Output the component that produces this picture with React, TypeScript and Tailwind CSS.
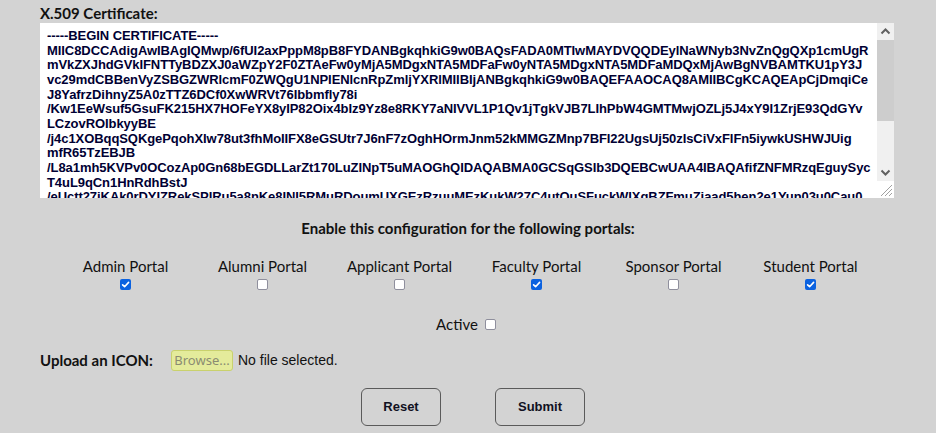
import React from "react";

const CERT = [
  "-----BEGIN CERTIFICATE-----",
  "MIIC8DCCAdigAwIBAgIQMwp/6fUI2axPppM8pB8FYDANBgkqhkiG9w0BAQsFADA0MTIwMAYDVQQDEylNaWNyb3NvZnQgQXp1cmUgR",
  "mVkZXJhdGVkIFNTTyBDZXJ0aWZpY2F0ZTAeFw0yMjA5MDgxNTA5MDFaFw0yNTA5MDgxNTA5MDFaMDQxMjAwBgNVBAMTKU1pY3J",
  "vc29mdCBBenVyZSBGZWRlcmF0ZWQgU1NPIENlcnRpZmljYXRlMIIBIjANBgkqhkiG9w0BAQEFAAOCAQ8AMIIBCgKCAQEApCjDmqiCe",
  "J8YafrzDihnyZ5A0zTTZ6DCf0XwWRVt76Ibbmfly78i",
  "/Kw1EeWsuf5GsuFK215HX7HOFeYX8yIP82Oix4bIz9Yz8e8RKY7aNIVVL1P1Qv1jTgkVJB7LIhPbW4GMTMwjOZLj5J4xY9I1ZrjE93QdGYv",
  "LCzovROIbkyyBE",
  "/j4c1XOBqqSQKgePqohXIw78ut3fhMoIIFX8eGSUtr7J6nF7zOghHOrmJnm52kMMGZMnp7BFI22UgsUj50zIsCiVxFIFn5iywkUSHWJUig",
  "mfR65TzEBJB",
  "/L8a1mh5KVPv0OCozAp0Gn68bEGDLLarZt170LuZINpT5uMAOGhQIDAQABMA0GCSqGSIb3DQEBCwUAA4IBAQAfifZNFMRzqEguySyc",
  "T4uL9qCn1HnRdhBstJ",
  "/eUctt27iKAk0rDYIZRekSPIRu5a8nKe8INI5RMuRDoumUXGEzRzuuMEzKukW27C4utQuSFuckWIXgBZFmuZiaad5hen2e1Yun03u0Cau0",
  "AbCdEf0123",
  "-----END CERTIFICATE-----",
].join("\n");

const portals: { name: string; checked: boolean }[] = [
  { name: "Admin Portal", checked: true },
  { name: "Alumni Portal", checked: false },
  { name: "Applicant Portal", checked: false },
  { name: "Faculty Portal", checked: true },
  { name: "Sponsor Portal", checked: false },
  { name: "Student Portal", checked: true },
];

function Box({ checked }: { checked: boolean }) {
  return checked ? (
    <span className="inline-flex w-[11px] h-[11px] rounded-[2px] bg-[#0b62e0] items-center justify-center">
      <svg width="11" height="11" viewBox="0 0 11 11">
        <path d="M2.6 5.8 L4.6 7.7 L8.6 3.4" fill="none" stroke="#ffffff" strokeWidth="1.6" strokeLinecap="round" strokeLinejoin="round" />
      </svg>
    </span>
  ) : (
    <span className="inline-block w-[11px] h-[11px] rounded-[2px] bg-white border border-[#8f8f9d]" />
  );
}

function Chevron({ up }: { up: boolean }) {
  return (
    <svg width="17" height="17" viewBox="0 0 17 17">
      <path
        d={up ? "M4.5 10.5 L8.5 6.5 L12.5 10.5" : "M4.5 6.5 L8.5 10.5 L12.5 6.5"}
        fill="none"
        stroke="#606060"
        strokeWidth="2"
      />
    </svg>
  );
}

export default function App() {
  const gothic = { fontFamily: "Lato, 'Noto Sans', sans-serif" };
  const arial = { fontFamily: "'Liberation Sans', Arial, sans-serif" };
  return (
    <div className="w-[936px] h-[433px] bg-[#d3d3d3] text-[#111111] overflow-hidden" style={gothic}>
      <div className="flex flex-col pt-[5px]">
        <div className="pl-[40px] text-[15px] leading-[17px] font-bold mb-[1px]">X.509 Certificate:</div>
        <div className="ml-[40px] w-[854px] h-[175px] bg-white flex">
          <textarea
            readOnly
            wrap="off"
            value={CERT}
            className="flex-1 h-full resize-none overflow-hidden whitespace-pre bg-white text-[13px] tracking-[-0.07px] leading-[14.67px] font-bold text-[#000033] pl-[7px] pt-[6px] outline-none border-0"
            style={arial}
          />
          <div className="w-[17px] h-full flex flex-col">
            <div className="flex-1 flex flex-col bg-[#f0f0f0]">
              <div className="h-[17px]">
                <Chevron up={true} />
              </div>
              <div className="h-[81px] bg-[#cdcdcd]" />
              <div className="flex-1" />
              <div className="h-[17px]">
                <Chevron up={false} />
              </div>
            </div>
            <div className="h-[17px] bg-white">
              <svg width="17" height="17" viewBox="0 0 17 17">
                <path d="M15 4 L4 15 M15 8 L8 15 M15 12 L12 15" stroke="#a0a0a0" strokeWidth="1" />
              </svg>
            </div>
          </div>
        </div>

        <div className="mt-[20px] text-center text-[15px] leading-[20px] font-bold">
          Enable this configuration for the following portals:
        </div>

        <div className="mt-[18px] mx-auto w-[822px] grid grid-cols-6">
          {portals.map((p) => (
            <div key={p.name} className="flex flex-col items-center">
              <span className="text-[15px] leading-[20px]">{p.name}</span>
              <span className="mt-[3px] flex">
                <Box checked={p.checked} />
              </span>
            </div>
          ))}
        </div>

        <div className="mt-[24px] flex justify-center items-center pr-[4px]">
          <span className="text-[15px] leading-[20px]">Active</span>
          <span className="ml-[7px] flex">
            <Box checked={false} />
          </span>
        </div>

        <div className="mt-[16px] pl-[40px] flex items-center h-[21px]">
          <span className="w-[131px] text-[15px] font-bold">Upload an ICON:</span>
          <span
            className="w-[62px] h-[21px] rounded-[3px] bg-[#e4eb9b] border border-[#c9d16d] text-[#8b8b72] text-[13px] flex items-center justify-center"
            style={{ fontFamily: "'Noto Sans', 'Liberation Sans', sans-serif" }}
          >
            Browse...
          </span>
          <span className="ml-[5px] text-[14px]" style={arial}>
            No file selected.
          </span>
        </div>

        <div className="mt-[17px] flex justify-center pl-[10px] gap-[54px]">
          <button
            className="w-[80px] h-[38px] rounded-[6px] border-[1.5px] border-[#5a5a5a] bg-transparent text-[13px] font-bold text-[#111122]"
            style={arial}
          >
            Reset
          </button>
          <button
            className="w-[90px] h-[38px] rounded-[6px] border-[1.5px] border-[#5a5a5a] bg-transparent text-[13px] font-bold text-[#111122]"
            style={arial}
          >
            Submit
          </button>
        </div>
      </div>
    </div>
  );
}
